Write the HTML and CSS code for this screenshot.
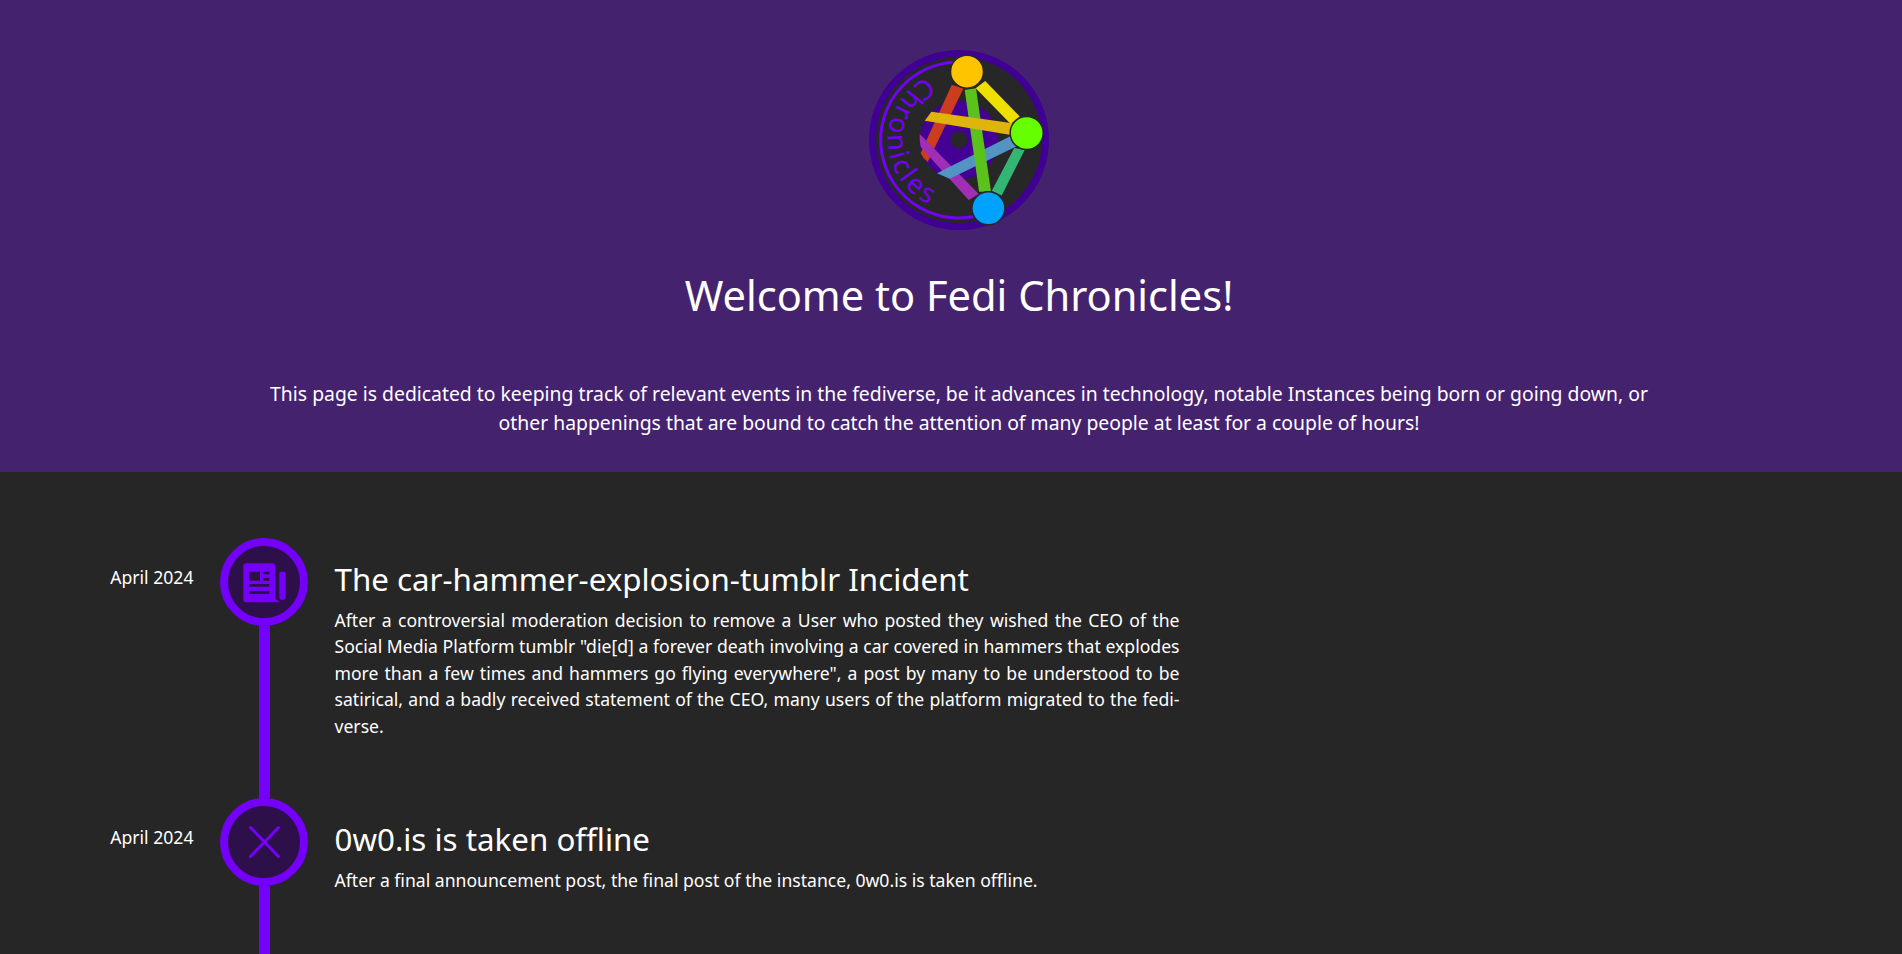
FILE: index.html
```html
<!DOCTYPE html>
<html lang="en">
<head>
<meta charset="utf-8">
<title>Fedi Chronicles</title>
<link rel="stylesheet" href="styles.css">
</head>
<body>
<div class="page">
<header class="hero">
  <svg class="logo" viewBox="8.300 0 200 200" width="200" height="200" aria-hidden="true">
    <circle cx="108.3" cy="100" r="86.500" fill="#272727" stroke="#400094" stroke-width="7"/>
    <path class="ring" d="M116 22.400 A78 78 0 1 0 138 172"/>
    <path id="arc" d="M108.3 29 A71 71 0 0 0 108.3 171" fill="none"/>
    <circle cx="108.3" cy="100" r="39.5" fill="#440094"/>
    <circle cx="108.3" cy="100" r="8.500" fill="#272727"/>
    <path class="red" d="M101 45L70 113Q72 118 77 122L113 48z"/>
    <path class="magenta" d="M69 94Q68.500 100 70 107L118 160L128 154z"/>
    <path class="steel" d="M86.300 133.300L160 96L165.500 106.500L99 138.700z"/>
    <path class="green" d="M114 50L125.300 48.300L140.300 151.700L128.400 151.700z"/>
    <path class="yellow" d="M125 48.300L134.500 41L169 76.400L160 84z"/>
    <path class="gold" d="M80.700 71.700L162 83.300L162 95.300L74 80.700z"/>
    <path class="sea" d="M163.500 108L174 110L151 155.500L141 151z"/>
    <circle cx="116.3" cy="31.7" r="16.5" class="node n1"/>
    <circle cx="176" cy="93" r="16.5" class="node n2"/>
    <circle cx="137.7" cy="168.3" r="16.5" class="node n3"/>
    <text class="logo-text"><textPath href="#arc" startOffset="34">Chronicles</textPath></text>
  </svg>
  <h1 class="hero-title">Welcome to Fedi Chronicles!</h1>
  <p class="hero-text">This page is dedicated to keeping track of relevant events in the fediverse, be it advances in technology, notable Instances being born or going down, or other happenings that are bound to catch the attention of many people at least for a couple of hours!</p>
</header>
<main class="timeline">
  <section class="entry">
    <div class="date">April 2024</div>
    <div class="rail">
      <div class="dot">
        <svg viewBox="0 0 48 48" width="48" height="48" aria-hidden="true">
          <path class="ink" fill-rule="evenodd" d="M3.300 8.300a3 3 0 0 1 3-3H32.300a3 3 0 0 1 3 3V38.500c0 2.800 1.800 4.800 6.400 5.800H6.300a3 3 0 0 1-3-3zM9.300 13.700v9h10.700v-9zM23.300 13.700v2.600h6v-2.600zM23.300 19.900v2.800h6v-2.800zM9.300 26v2.700h20V26zM9.300 33v3h20v-3z"/>
          <path class="ink" d="M39.300 15.300a1.600 1.600 0 0 1 1.600-1.600h3.200a1.600 1.600 0 0 1 1.600 1.600V39c0 2-1.200 3-3.200 3-1.900 0-3.200-1-3.200-3z"/>
        </svg>
      </div>
      <div class="line"></div>
    </div>
    <article class="body">
      <h2 class="entry-title">The car-hammer-explosion-tumblr Incident</h2>
      <p class="entry-text">After a controversial moderation decision to remove a User who posted they wished the CEO of the Social Media Platform tumblr "die[d] a forever death involving a car covered in hammers that explodes more than a few times and hammers go flying everywhere", a post by many to be understood to be satirical, and a badly received statement of the CEO, many users of the platform migrated to the fedi&shy;verse.</p>
    </article>
  </section>
  <section class="entry">
    <div class="date">April 2024</div>
    <div class="rail">
      <div class="dot">
        <svg viewBox="0 0 48 48" width="48" height="48" aria-hidden="true">
          <path class="cross" d="M10.500 9.500L38.500 38.500M38.500 9.500L10.500 38.500"/>
        </svg>
      </div>
      <div class="line"></div>
    </div>
    <article class="body">
      <h2 class="entry-title">0w0.is is taken offline</h2>
      <p class="entry-text">After a final announcement post, the final post of the instance, 0w0.is is taken offline.</p>
    </article>
  </section>
</main>
</div>
</body>
</html>
```
FILE: styles.css
```css
html, body { margin: 0; padding: 0; }
body { background: #262626; color: #fff; font-family: "Noto Sans", sans-serif; }
.page { height: 100vh; overflow: hidden; }
.hero { background: #45226e; height: 472px; padding: 40px 0 0 16px; box-sizing: border-box; display: flex; flex-direction: column; align-items: center; }
.logo { display: block; flex: none; }
.ring { fill: none; stroke: #7400fa; stroke-width: 3; }
.red { fill: #cc3d1e; }
.magenta { fill: #a02fb5; }
.steel { fill: #5294c2; }
.green { fill: #5ac21a; }
.yellow { fill: #f0e000; }
.gold { fill: #dfb40b; }
.sea { fill: #33b574; }
.node { stroke: #272727; stroke-width: 1.500; }
.n1 { fill: #ffc400; }
.n2 { fill: #66ff00; }
.n3 { fill: #00a2ff; }
.logo-text { fill: #7400fa; font-family: "Noto Sans", sans-serif; font-size: 27px; font-weight: 400; letter-spacing: 2.800px; }
.hero-title { margin: 25px 0 0; font-size: 41.600px; font-weight: 400; line-height: 60px; }
.hero-text { margin: 54px 0 0; width: 1400px; text-align: center; font-size: 19.360px; line-height: 29px; }
.timeline { padding: 66px 0 0 0; }
.entry { display: flex; height: 260px; }
.date { width: 193.500px; flex: none; text-align: right; font-size: 17.600px; line-height: 24px; padding-top: 27px; box-sizing: border-box; }
.rail { margin-left: 26.500px; width: 88px; flex: none; display: flex; flex-direction: column; align-items: center; }
.dot { width: 88px; height: 88px; box-sizing: border-box; border: 8px solid #7400fa; border-radius: 50%; background: #2d0f4a; display: flex; align-items: center; justify-content: center; flex: none; }
.line { width: 11px; flex: 1; background: #7400fa; }
.ink { fill: #7400fa; }
.cross { stroke: #7400fa; stroke-width: 3; stroke-linecap: round; fill: none; }
.body { margin-left: 26.500px; width: 845px; flex: none; }
.entry-title { margin: 19px 0 0; font-size: 31.300px; font-weight: 400; line-height: 44px; }
.entry-text { margin: 5.500px 0 0; font-size: 17.600px; line-height: 26.500px; text-align: justify; hyphens: manual; }
```
